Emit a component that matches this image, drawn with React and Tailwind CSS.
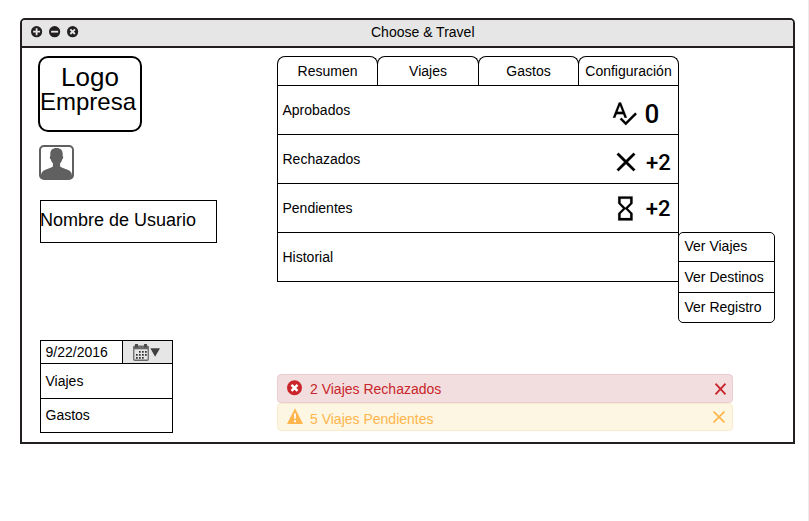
const INK = '#231f20';

function WindowButton({ glyph }) {
  return (
    <svg width="12" height="12" viewBox="0 0 12 12" className="block">
      <circle cx="5.600" cy="5.700" r="5.600" fill={INK} />
      <path d={glyph} stroke="#e6e6e6" strokeWidth="1.8" fill="none" transform="translate(-.4 -.3)" />
    </svg>
  );
}

function Avatar() {
  return (
    <svg width="35" height="35" viewBox="0 0 35 35" className="mt-[13px] ml-px block">
      <rect x="1" y="1" width="33" height="33" rx="4" fill="#fff" stroke="#606060" strokeWidth="2" />
      <path
        d="M17.5 3c4 0 6.3 2.2 6.2 6v2.200c.9.3.7 2.800-.6 3.300-.4 1.700-1 2.800-2 3.800v3.200c2 1.600 5 2 7.500 3.200 3.200 1.400 4.400 3 4.400 6V34H2v-3.300c0-3 1.200-4.600 4.400-6 2.500-1.200 5.500-1.600 7.500-3.200v-3.200c-1-1-1.600-2.100-2-3.800-1.300-.5-1.500-3-.6-3.300V9c-.1-3.800 2.200-6 6.200-6z"
        fill="#606060"
      />
    </svg>
  );
}

function CalendarIcon() {
  return (
    <svg width="16" height="17" viewBox="0 0 16 17" className="block">
      <rect x="0.75" y="2.250" width="14.500" height="14" rx="1" fill="#e6e6e6" stroke="#6a6a6c" strokeWidth="1.300" />
      <path d="M0.500 2h15v3.300h-15z" fill="#6a6a6c" />
      <path d="M2 0h3v3.500H2zM11 0h3v3.500h-3z" fill="#4c4c4c" />
      <path
        d="M6 7h1.700v1.700H6zM9 7h1.700v1.700H9zM12 7h1.700v1.700H12zM3 10h1.700v1.700H3zM6 10h1.700v1.700H6zM9 10h1.700v1.700H9zM12 10h1.700v1.700H12zM3 13h1.700v1.700H3zM6 13h1.700v1.700H6zM9 13h1.700v1.700H9z"
        fill="#333"
      />
    </svg>
  );
}

function DatePanel() {
  return (
    <div className="mt-[97px] ml-[2px] h-[93px] w-[133px] border border-black">
      <div className="flex h-[23px] border-b border-black">
        <div className="flex w-[82px] items-center border-r border-black pl-[4.500px]">9/22/2016</div>
        <div className="flex flex-1 items-center gap-px bg-[#e6e6e6] pl-[10px]">
          <CalendarIcon />
          <svg width="10" height="9" viewBox="0 0 10 9">
            <path d="M0.300 0.300h9.700L5.100 8.700z" fill="#404041" />
          </svg>
        </div>
      </div>
      <div className="flex h-[35px] items-center border-b border-black pl-[4.500px]">Viajes</div>
      <div className="flex h-[33px] items-center pb-[2px] pl-[4.500px]">Gastos</div>
    </div>
  );
}

const TABS = [
  ['Resumen', 'w-[101px]'],
  ['Viajes', 'w-[102px] -ml-px'],
  ['Gastos', 'w-[101px] -ml-px'],
  ['Configuración', 'w-[101px] -ml-px'],
];

const SPELLCHECK =
  'M12.45 16h2.090L9.430 3H7.570L2.460 16h2.090l1.120-3h5.640l1.140 3zm-6.020-5L8.500 5.480 10.570 11H6.430zm15.160.590l-8.090 8.090L9.830 16l-1.410 1.410 5.090 5.090L23 13l-1.410-1.410z';
const CLOSE =
  'M19 6.410L17.590 5 12 10.590 6.410 5 5 6.410 10.590 12 5 17.590 6.410 19 12 13.410 17.590 19 19 17.590 13.410 12z';
const HOURGLASS =
  'M6 2v6h.010L6 8.010 10 12l-4 4 .010.010H6V22h12v-5.990h-.010L18 16l-4-4 4-3.990-.010-.010H18V2H6zm10 14.500V20H8v-3.500l4-4 4 4zm-4-5l-4-4V4h8v3.500l-4 4z';

function Counter({ path, size, value, box, text }) {
  return (
    <div className={`flex items-center ${box}`}>
      <svg width={size} height={size} viewBox="0 0 24 24" className="shrink-0">
        <path d={path} fill="#000" stroke="#000" strokeWidth="0.150" />
      </svg>
      <span className={`font-['Roboto',sans-serif] leading-none font-medium ${text}`}>{value}</span>
    </div>
  );
}

const ROWS = [
  { label: 'Aprobados', path: SPELLCHECK, size: 28, value: '0', box: 'w-[68px] pt-[5px]', text: 'ml-[6.500px] mt-[2px] text-[26px]' },
  { label: 'Rechazados', path: CLOSE, size: 32, value: '+2', box: 'w-[68.500px] pt-[6px]', text: 'ml-[4.500px] mt-[2px] text-[22px]' },
  { label: 'Pendientes', path: HOURGLASS, size: 28.8, value: '+2', box: 'w-[67.500px] pt-0', text: 'ml-[6.500px] mt-[2px] text-[22px]' },
  { label: 'Historial' },
];

function Summary() {
  return (
    <div className="w-[402px]">
      <div className="flex h-[29px]">
        {TABS.map(([name, width]) => (
          <div key={name} className={`flex items-center justify-center rounded-t-[8px] border border-b-0 border-black ${width}`}>
            {name}
          </div>
        ))}
      </div>
      <div className="border border-b-0 border-black">
        {ROWS.map((row) => (
          <div key={row.label} className="flex h-[49px] items-center justify-between border-b border-black pl-[4.500px]">
            <span>{row.label}</span>
            {row.path && <Counter {...row} />}
          </div>
        ))}
      </div>
    </div>
  );
}

function Submenu() {
  return (
    <div className="mt-[176px] -ml-px h-[91px] w-[97px] rounded-[5px] border border-black bg-white">
      <div className="flex h-[29px] items-center border-b border-black pb-[2px] pl-[5.500px]">Ver Viajes</div>
      <div className="flex h-[31px] items-center border-b border-black pl-[5.500px]">Ver Destinos</div>
      <div className="flex h-[29px] items-center pb-[2px] pl-[5.500px]">Ver Registro</div>
    </div>
  );
}

function Alerts() {
  return (
    <div className="mt-[51px] w-[456px]">
      <div className="flex h-[29px] items-center rounded-[4px] border border-[#ebccd1] bg-[#f2dede] pr-[6px] pl-[9px] text-[#c9252b]">
        <svg width="16" height="16" viewBox="0 0 16 16" className="mb-px">
          <circle cx="7.500" cy="7.800" r="7.500" fill="#c9252b" />
          <path d="M4.500 4.800l6 6M10.500 4.800l-6 6" stroke="#fff" strokeWidth="2.600" />
        </svg>
        <span className="ml-[7px] flex-1">2 Viajes Rechazados</span>
        <svg width="11" height="12" viewBox="0 0 11 12">
          <path d="M0.500 0.700l10 10.600M10.500 0.700l-10 10.600" stroke="#c9252b" strokeWidth="1.800" />
        </svg>
      </div>
      <div className="flex h-[28px] items-center rounded-[4px] border border-[#faebcc] bg-[#fcf6e2] pr-[7px] pl-[9px] text-[#ffb54c]">
        <svg width="16" height="16" viewBox="0 0 16 16" className="mb-[2px]">
          <path d="M8 0.300L16 16H0z" fill="#ffb54c" />
          <path d="M7 5.500h2l-.3 5.500H7.300zM7 12.200h2v2H7z" fill="#fff" />
        </svg>
        <span className="mt-[3px] ml-[7px] flex-1">5 Viajes Pendientes</span>
        <svg width="12" height="12" viewBox="0 0 12 12">
          <path d="M0.500 0.500l11 11M11.500 0.500l-11 11" stroke="#ffb54c" strokeWidth="1.700" />
        </svg>
      </div>
    </div>
  );
}

export default function App() {
  return (
    <div className="h-[521px] w-[809px] border-r border-[#ececec] bg-white pt-[18px] pl-[20px] font-['Liberation_Sans',Arial,sans-serif] text-[14px] leading-[16px] text-black">
      <div className="h-[426px] w-[775px] rounded-t-[5px] border-2 border-[#231f20]">
        <div className="flex h-[28px] items-center rounded-t-[3px] border-b-2 border-[#231f20] bg-[#e6e6e6]">
          <div className="flex w-[349px] gap-[6px] pb-[2px] pl-[9px]">
            <WindowButton glyph="M6 2.500v7M2.500 6h7" />
            <WindowButton glyph="M2.500 6h7" />
            <WindowButton glyph="M3.700 3.700l4.600 4.600M8.300 3.700l-4.600 4.600" />
          </div>
          <div className="pb-[3px]">Choose &amp; Travel</div>
        </div>
        <div className="flex">
          <div className="w-[255px] pt-2 pl-4">
            <div className="h-[76px] w-[104px] rounded-[10px] border-2 border-black pt-[7px] text-center">
              <div className="text-[26px] leading-[25px]">Logo</div>
              <div className="-ml-[4px] text-[24px] leading-[24px]">Empresa</div>
            </div>
            <Avatar />
            <div className="mt-[20px] ml-[2px] flex h-[43px] w-[177px] items-center border border-black pb-[3px] text-[18px] leading-[20px]">
              <span className="-ml-px">Nombre de Usuario</span>
            </div>
            <DatePanel />
          </div>
          <div className="pt-2">
            <div className="flex">
              <Summary />
              <Submenu />
            </div>
            <Alerts />
          </div>
        </div>
      </div>
    </div>
  );
}
